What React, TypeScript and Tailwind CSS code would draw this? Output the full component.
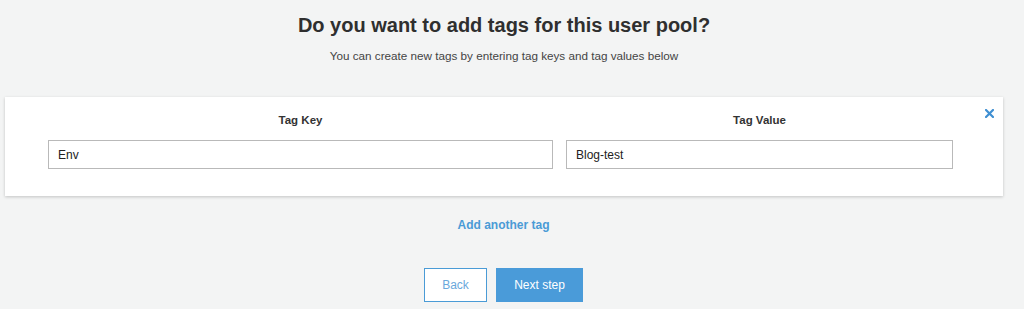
export default function App() {
  return (
    <div className="h-[309px] w-[1024px] overflow-hidden bg-[#f3f4f4] font-[family-name:'Liberation_Sans',Arial,sans-serif] text-[#333]">
      <div className="flex w-[1008px] flex-col items-center">
        <h1 className="mt-[12px] text-[20px] font-bold leading-[26px] text-[#2f2f2f]">
          Do you want to add tags for this user pool?
        </h1>
        <p className="mt-[10px] text-[11.7px] leading-[16px] text-[#444]">
          You can create new tags by entering tag keys and tag values below
        </p>
      </div>

      <div className="relative ml-[5px] mt-[33px] h-[99px] w-[998px] bg-white shadow-[0_1px_3px_rgba(0,0,0,0.2)]">
        <div className="grid grid-cols-[505px_387px] gap-x-[13px] pl-[43px] pt-[16px]">
          <div className="text-center text-[11.5px] font-bold leading-[14px] text-[#333]">Tag Key</div>
          <div className="text-center text-[11.5px] font-bold leading-[14px] text-[#333]">Tag Value</div>
          <input
            readOnly
            value="Env"
            className="mt-[13px] h-[29px] border border-[#b9b9b9] px-[9px] text-[12px] text-[#222] outline-none"
          />
          <input
            readOnly
            value="Blog-test"
            className="mt-[13px] h-[29px] border border-[#b9b9b9] px-[9px] text-[12px] text-[#222] outline-none"
          />
        </div>
        <button className="absolute right-[9px] top-[12px] text-[#3f8fd2]">
          <svg width="9" height="9" viewBox="0 0 9 9">
            <path d="M1 1L8 8M8 1L1 8" stroke="currentColor" strokeWidth="2.2" strokeLinecap="square" />
          </svg>
        </button>
      </div>

      <div className="flex w-[1007px] flex-col items-center">
        <a className="mt-[21px] text-[12px] font-bold leading-[16px] text-[#4a9bd6]">Add another tag</a>
        <div className="mt-[35px] flex gap-[9px]">
          <button className="h-[34px] w-[63px] border border-[#4a9bd6] bg-white text-[12px] text-[#6aa8dc]">
            Back
          </button>
          <button className="h-[34px] w-[87px] bg-[#4a9bd9] text-[12px] text-white">Next step</button>
        </div>
      </div>
    </div>
  );
}
